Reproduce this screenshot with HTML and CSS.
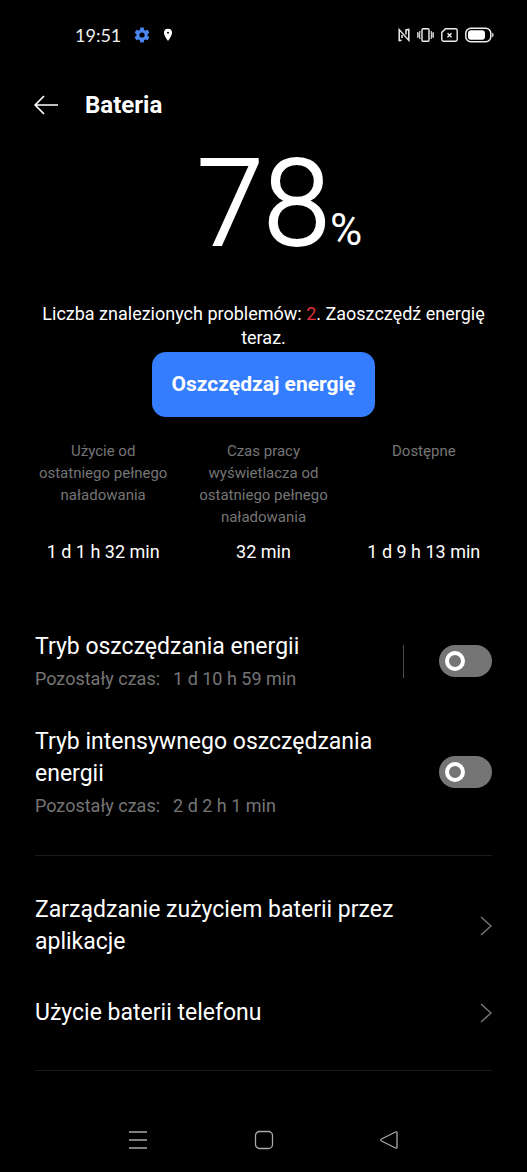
FILE: index.html
```html
<!DOCTYPE html>
<html lang="pl">
<head>
<meta charset="utf-8">
<meta name="viewport" content="width=device-width, initial-scale=1">
<title>Bateria</title>
<link rel="stylesheet" href="styles.css">
</head>
<body>
<div class="screen">
  <div class="status">
    <div class="status-group">
      <span class="clock">19:51</span>
      <svg class="gear" width="16" height="16" viewBox="0 0 16 16" aria-hidden="true"><g fill="#4a86ee"><rect x="6" y="0.5" width="4" height="15" rx="1"/><rect x="6" y="0.5" width="4" height="15" rx="1" transform="rotate(60 8 8)"/><rect x="6" y="0.5" width="4" height="15" rx="1" transform="rotate(120 8 8)"/><circle cx="8" cy="8" r="5.6"/></g><circle cx="8" cy="8" r="2.6" fill="#000"/></svg>
      <svg width="10" height="14" viewBox="0 0 10 14" aria-hidden="true"><path d="M5 .8a4 4 0 0 0-4 4C1 8 5 13 5 13s4-5 4-8.200a4 4 0 0 0-4-4z" fill="#fff"/><circle cx="5" cy="4.800" r="1" fill="#000"/></svg>
    </div>
    <div class="status-group status-right">
      <svg width="12" height="16" viewBox="0 0 12 16" fill="none" stroke="#eee" stroke-width="1.500" aria-hidden="true"><path d="M3.500 13.200L1.200 13.600V2.600L10.800 13.400V2.400L8 2.800V7.500M4 8V11"/></svg>
      <svg width="17" height="16" viewBox="0 0 17 16" fill="none" stroke="#eee" stroke-width="1.400" aria-hidden="true"><rect x="5" y="1.700" width="7" height="12.600" rx="1"/><path d="M2.800 4v2l-.8 1 .8 1-.8 1 .8 1v2M14.200 4v2l.8 1-.8 1 .8 1-.8 1v2M.8 5v6M16.200 5v6" stroke-width="1.100"/></svg>
      <svg width="17" height="16" viewBox="0 0 17 16" fill="none" stroke="#eee" stroke-width="1.400" aria-hidden="true"><path d="M4.500 1.700H14.500A1.700 1.700 0 0 1 16.200 3.400V12.600A1.700 1.700 0 0 1 14.500 14.300H2.500A1.700 1.700 0 0 1 .8 12.600V5.400z"/><path d="M6.500 6.200l4 4M10.500 6.200l-4 4"/></svg>
      <svg width="29" height="16" viewBox="0 0 29 16" aria-hidden="true"><rect x=".8" y="1.200" width="25" height="13.600" rx="5" fill="none" stroke="#eee" stroke-width="1.500"/><rect x="3" y="3.200" width="17" height="9.600" rx="3" fill="#fff"/><path d="M27.200 5.500q1.400.6 1.400 2.500t-1.400 2.500z" fill="#eee"/></svg>
    </div>
  </div>

  <header class="header">
    <button class="back" type="button" aria-label="Wstecz"><svg width="24" height="20" viewBox="0 0 24 20" fill="none" stroke="#fff" stroke-width="1.700" aria-hidden="true"><path d="M10 1L1.200 10L10 19M1.200 10H24"/></svg></button>
    <h1 class="title">Bateria</h1>
  </header>

  <main class="main">
    <div class="level"><span class="level-number">78</span><span class="level-unit">%</span></div>
    <p class="notice">Liczba znalezionych problemów: <span class="count">2</span>. Zaoszczędź energię teraz.</p>
    <button class="save" type="button">Oszczędzaj energię</button>

    <dl class="stats">
      <div class="stat"><dt>Użycie od ostatniego pełnego naładowania</dt><dd>1 d 1 h 32 min</dd></div>
      <div class="stat"><dt>Czas pracy wyświetlacza od ostatniego pełnego naładowania</dt><dd>32 min</dd></div>
      <div class="stat"><dt>Dostępne</dt><dd>1 d 9 h 13 min</dd></div>
    </dl>

    <section class="group modes">
      <div class="row">
        <label class="text" for="saver"><span class="name">Tryb oszczędzania energii</span><span class="detail"><span>Pozostały czas:</span><span>1 d 10 h 59 min</span></span></label>
        <span class="separator"></span>
        <input class="switch" id="saver" type="checkbox" role="switch">
      </div>
      <div class="row">
        <label class="text" for="super-saver"><span class="name">Tryb intensywnego oszczędzania energii</span><span class="detail"><span>Pozostały czas:</span><span>2 d 2 h 1 min</span></span></label>
        <input class="switch" id="super-saver" type="checkbox" role="switch">
      </div>
    </section>

    <nav class="group links">
      <a class="row" href="#apps"><span class="text name">Zarządzanie zużyciem baterii przez aplikacje</span><svg class="chevron" width="12" height="20" viewBox="0 0 12 20" aria-hidden="true"><path d="M1 1l10 9l-10 9"/></svg></a>
      <a class="row" href="#usage"><span class="text name">Użycie baterii telefonu</span><svg class="chevron" width="12" height="20" viewBox="0 0 12 20" aria-hidden="true"><path d="M1 1l10 9l-10 9"/></svg></a>
    </nav>
  </main>

  <footer class="navbar">
    <button type="button" aria-label="Ostatnie"><svg width="20" height="20" viewBox="0 0 20 20" aria-hidden="true"><path d="M1 2h18M1 10h18M1 18h18"/></svg></button>
    <button type="button" aria-label="Ekran główny"><svg width="20" height="20" viewBox="0 0 20 20" aria-hidden="true"><rect x="1.500" y="1.500" width="17" height="17" rx="4"/></svg></button>
    <button type="button" aria-label="Wróć"><svg width="20" height="20" viewBox="0 0 20 20" aria-hidden="true"><path d="M16.500 2L2.500 9Q1 10 2.500 11L16.500 18Q18 18.500 18 17V3Q18 1.500 16.500 2z"/></svg></button>
  </footer>
</div>
</body>
</html>
```
FILE: styles.css
```css
*,
*::before { box-sizing: border-box; }

body {
  margin: 0;
  background: #000;
  color: #fff;
  font-family: Roboto, "Noto Sans", sans-serif;
}

button {
  padding: 0;
  border: 0;
  background: none;
  color: inherit;
  font: inherit;
}

svg { display: block; flex: none; }

.screen {
  display: flex;
  flex-direction: column;
  min-height: 100vh;
}

.status {
  display: flex;
  justify-content: space-between;
  align-items: center;
  padding: 23px 33px 0 75px;
}

.status-group {
  display: flex;
  align-items: center;
  gap: 13px;
}

.status-right { gap: 7px; }

.clock {
  font: 18px/24px Lato, sans-serif;
  color: #eee;
}

.header {
  display: flex;
  align-items: center;
  gap: 27px;
  padding: 42px 34px 0;
}

.title {
  margin: 0;
  font-size: 24px;
  line-height: 32px;
  font-weight: 700;
}

.main {
  flex: 1;
  padding: 0 35px;
}

.level {
  display: grid;
  grid-template-columns: 1fr auto 1fr;
  align-items: baseline;
  margin-top: 22px;
}

.level-number {
  grid-column: 2;
  font-size: 120px;
  line-height: 122px;
  font-weight: 300;
  -webkit-text-stroke: 2px #fff;
}

.level-unit {
  font-size: 44px;
  line-height: 44px;
}

.notice {
  margin: 37px 0 0;
  text-align: center;
  font-size: 18px;
  line-height: 24px;
}

.count { color: #e0303c; }

.save {
  display: block;
  margin: 2px auto 0;
  padding: 20px;
  border-radius: 14px;
  background: #347dff;
  font-size: 21px;
  line-height: 25px;
  font-weight: 700;
}

.stats {
  display: grid;
  grid-template-columns: repeat(3, 1fr);
  gap: 24px;
  margin: 23px 0 0;
  text-align: center;
}

.stat {
  display: flex;
  flex-direction: column;
  justify-content: space-between;
  gap: 12px;
}

.stat dt {
  color: #757575;
  font-size: 15px;
  line-height: 22px;
}

.stat dd {
  margin: 0;
  font-size: 18px;
  line-height: 24px;
  white-space: nowrap;
}

.group {
  display: flex;
  flex-direction: column;
  border-bottom: 1px solid #1a1a1a;
}

.modes {
  gap: 35px;
  margin-top: 67px;
  padding-bottom: 37px;
}

.links {
  gap: 39px;
  padding: 38px 0 41px;
}

.row {
  display: flex;
  align-items: center;
  color: inherit;
  text-decoration: none;
}

.text { flex: 1; padding-right: 40px; }

.name {
  display: block;
  font-size: 23px;
  line-height: 32px;
}

.detail {
  display: flex;
  gap: 13px;
  padding-top: 4px;
  color: #757575;
  font-size: 18px;
  line-height: 24px;
}

.separator {
  width: 1px;
  height: 33px;
  margin-right: 35px;
  background: #4a4a4a;
}

.switch {
  appearance: none;
  flex: none;
  display: flex;
  align-items: center;
  width: 53px;
  height: 32px;
  margin: 0;
  padding-left: 6px;
  border-radius: 16px;
  background: #757575;
}

.switch::before {
  content: "";
  width: 20px;
  height: 20px;
  border: 4px solid #fff;
  border-radius: 50%;
}

.switch:checked {
  justify-content: flex-end;
  padding: 0 6px 0 0;
  background: #347dff;
}

.chevron {
  fill: none;
  stroke: #757575;
  stroke-width: 1.5;
}

.navbar {
  display: flex;
  justify-content: space-between;
  padding: 0 128px 22px;
}

.navbar svg {
  fill: none;
  stroke: #aaa;
  stroke-width: 1.3;
}
```
